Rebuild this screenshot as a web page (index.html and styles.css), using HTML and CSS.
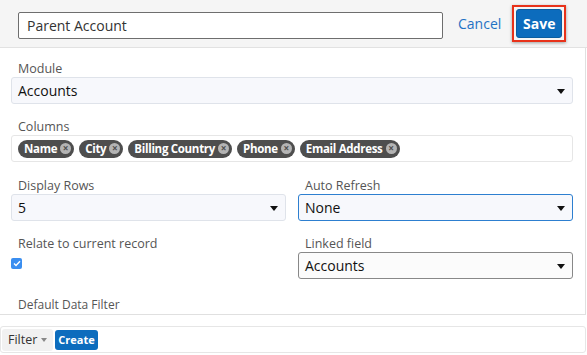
FILE: index.html
```html
<!DOCTYPE html>
<html>
<head>
<meta charset="utf-8">
<link rel="stylesheet" href="styles.css">
</head>
<body>
<div class="header">
  <div class="title-input">Parent Account</div>
  <a class="cancel">Cancel</a>
  <div class="save-ring"><button class="save">Save</button></div>
</div>
<div class="main">
  <div class="field">
    <div class="label">Module</div>
    <div class="select">Accounts<span class="caret"></span></div>
  </div>
  <div class="field">
    <div class="label">Columns</div>
    <div class="pills">
      <span class="pill">Name<span class="x">×</span></span>
      <span class="pill">City<span class="x">×</span></span>
      <span class="pill">Billing Country<span class="x">×</span></span>
      <span class="pill">Phone<span class="x">×</span></span>
      <span class="pill">Email Address<span class="x">×</span></span>
    </div>
  </div>
  <div class="grid">
    <div class="field">
      <div class="label">Display Rows</div>
      <div class="select">5<span class="caret"></span></div>
    </div>
    <div class="field">
      <div class="label">Auto Refresh</div>
      <div class="select focus">None<span class="caret"></span></div>
    </div>
    <div class="field">
      <div class="label">Relate to current record</div>
      <div class="check"><svg width="8" height="7" viewBox="0 0 8 7"><path d="M1 3.6 L3 5.5 L7 1.2" fill="none" stroke="#fff" stroke-width="1.4"/></svg></div>
    </div>
    <div class="field">
      <div class="label">Linked field</div>
      <div class="select dark">Accounts<span class="caret"></span></div>
    </div>
  </div>
  <div class="label small">Default Data Filter</div>
</div>
<div class="footer">
  <button class="filter">Filter<span class="fcaret"></span></button>
  <button class="create">Create</button>
</div>
</body>
</html>
```
FILE: styles.css
```css
* { box-sizing: border-box; }
body {
  margin: 0;
  width: 587px;
  height: 355px;
  overflow: hidden;
  background: #fff;
  font-family: "Open Sans", "Liberation Sans", sans-serif;
  color: #222;
}
.header {
  height: 48px;
  background: #f5f5f5;
  border-bottom: 1px solid #e2e2e2;
  display: flex;
  align-items: center;
  padding: 0 0 0 18px;
}
.title-input {
  width: 425px;
  height: 27px;
  margin-top: 4px;
  border: 1px solid #6e6e6e;
  border-radius: 2px;
  background: #fff;
  font-size: 14px;
  line-height: 25px;
  padding-left: 8px;
  color: #333;
}
.cancel {
  margin-left: 15px;
  font-size: 14px;
  color: #1f72c4;
}
.save-ring {
  margin-left: 11px;
  border: 2px solid #e8321a;
  padding: 2px;
  background: #f5f5f5;
  box-shadow: 0 1px 3px rgba(0,0,0,0.35);
  display: flex;
}
.save {
  width: 46px;
  height: 29px;
  border: 1px solid #0a5da0;
  border-radius: 3px;
  background: #0c6cbd;
  color: #fff;
  font-family: "Open Sans", sans-serif;
  font-weight: 700;
  font-size: 14px;
  padding: 0;
}
.main {
  width: 586px;
  height: 267px;
  border-right: 1px solid #e0e0e0;
  border-bottom: 1px solid #e0e0e0;
  padding: 12px 12px 0 11px;
}
.field { display: flex; flex-direction: column; }
.label {
  font-size: 12.5px;
  color: #555;
  padding-left: 7px;
  line-height: 17px;
}
.select {
  position: relative;
  height: 27px;
  border: 1px solid #dfe3ea;
  border-radius: 3px;
  background: #f7f8fc;
  font-size: 14px;
  line-height: 25px;
  padding-left: 6px;
  color: #111;
  margin-bottom: 14px;
}
.select.focus { border-color: #2d7fd0; }
.select.dark { border-color: #888; background: #fbfbfb; }
.caret {
  position: absolute;
  right: 7px;
  top: 11px;
  width: 0;
  height: 0;
  border-left: 4.5px solid transparent;
  border-right: 4.5px solid transparent;
  border-top: 5px solid #111;
}
.pills {
  height: 27px;
  border: 1px solid #e6e6e6;
  border-radius: 3px;
  display: flex;
  align-items: center;
  gap: 5px;
  padding-left: 6px;
  margin-bottom: 15px;
}
.pill {
  display: inline-flex;
  align-items: center;
  height: 18px;
  background: #4e4e4e;
  border-radius: 9px;
  color: #fff;
  font-weight: 700;
  font-size: 11.5px;
  padding: 0 3px 0 6px;
  letter-spacing: -0.3px;
}
.x {
  display: inline-flex;
  align-items: center;
  justify-content: center;
  width: 11px;
  height: 11px;
  margin-left: 3px;
  border-radius: 50%;
  background: #b4b4b4;
  color: #4e4e4e;
  font-size: 10px;
  line-height: 11px;
  font-weight: 700;
  letter-spacing: 0;
}
.grid {
  display: grid;
  grid-template-columns: 275px 275px;
  column-gap: 12px;
}
.check {
  width: 11px;
  height: 11px;
  margin-top: 6px;
  border-radius: 2px;
  background: #3a8ef0;
  display: flex;
  align-items: center;
  justify-content: center;
}
.label.small { margin-top: 3px; font-size: 12px; }
.footer {
  margin-top: 11px;
  width: 586px;
  height: 27px;
  border: 1px solid #e6e6e6;
  border-radius: 3px;
  display: flex;
  align-items: center;
  gap: 2px;
  padding-left: 1px;
}
.filter {
  height: 22px;
  border: 0;
  border-radius: 3px;
  background: #f1f1f1;
  font-family: "Open Sans", sans-serif;
  font-size: 12.5px;
  color: #333;
  padding: 0 6px;
  display: flex;
  align-items: center;
}
.fcaret {
  margin-left: 4px;
  border-left: 3.5px solid transparent;
  border-right: 3.5px solid transparent;
  border-top: 4px solid #888;
}
.create {
  height: 20px;
  border: 0;
  border-radius: 3px;
  background: #0c6cbd;
  color: #fff;
  font-family: "Open Sans", sans-serif;
  font-weight: 700;
  font-size: 11px;
  padding: 0 3px;
}
```
